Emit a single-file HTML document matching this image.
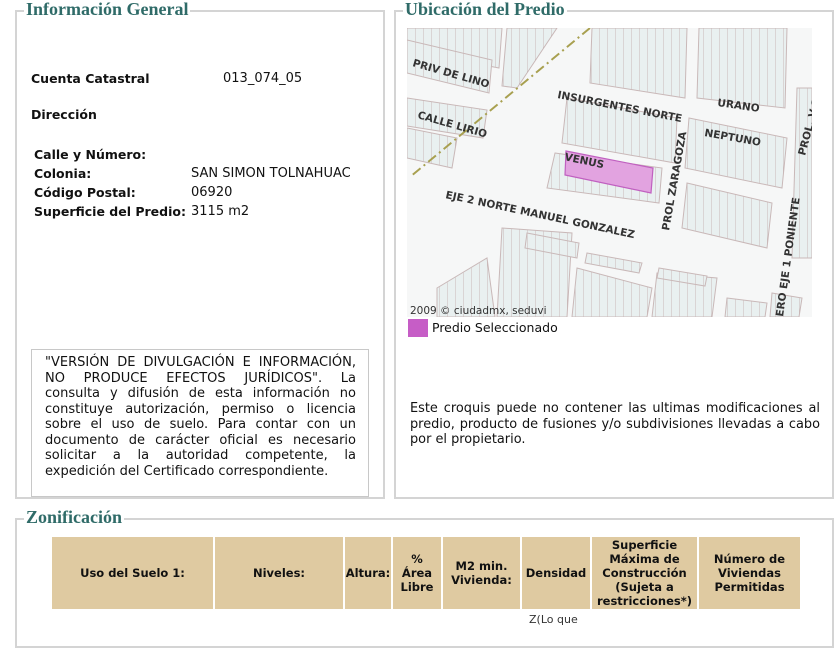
<!DOCTYPE html>
<html><head><meta charset="utf-8"><style>
*{margin:0;padding:0;box-sizing:border-box}
body{width:840px;height:630px;background:#fff;position:relative;overflow:hidden;font-family:"DejaVu Sans","Liberation Sans",sans-serif;font-size:12.5px;color:#111}
.fs{position:absolute;border:2px solid #d4d4d4;}
.lg{position:absolute;background:#fff;font-family:"Liberation Serif",serif;font-weight:bold;font-size:18px;color:#2f6b68;padding:0 2px;line-height:18px}
.a{position:absolute;white-space:nowrap}
.b{font-weight:bold}
table{position:absolute;left:50px;top:535px;border-collapse:collapse}
th{background:#dfcaa1;border:2px solid #fff;font-size:11.5px;font-weight:bold;text-align:center;line-height:14px;height:74px;padding:0}
</style></head><body>
<div class="fs" style="left:15px;top:10px;width:370px;height:489px"></div>
<div class="lg" style="left:24px;top:0px">Información General</div>
<div class="a b" style="left:31px;top:71px">Cuenta Catastral</div>
<div class="a" style="left:223px;top:71px;font-size:13px">013_074_05</div>
<div class="a b" style="left:31px;top:107px">Dirección</div>
<div class="a b" style="left:34px;top:145px;line-height:19px">Calle y Número:<br>Colonia:<br>Código Postal:<br>Superficie del Predio:</div>
<div class="a" style="left:191px;top:164px;line-height:19px;font-size:13px">SAN SIMON TOLNAHUAC<br>06920<br>3115 m2</div>
<div style="position:absolute;left:31px;top:349px;width:338px;height:148px;border:1px solid #c8c8c8;padding:5px 12px 0 13px;font-size:13px;line-height:15.5px;text-align:justify">"VERSIÓN DE DIVULGACIÓN E INFORMACIÓN, NO PRODUCE EFECTOS JURÍDICOS". La consulta y difusión de esta información no constituye autorización, permiso o licencia sobre el uso de suelo. Para contar con un documento de carácter oficial es necesario solicitar a la autoridad competente, la expedición del Certificado correspondiente.</div>

<div class="fs" style="left:394px;top:10px;width:440px;height:489px"></div>
<div class="lg" style="left:403px;top:0px">Ubicación del Predio</div>
<svg style="position:absolute;left:407px;top:28px" width="405" height="289" viewBox="0 0 405 289">
<defs><pattern id="p" width="8" height="60" patternUnits="userSpaceOnUse"><rect width="8" height="60" fill="#e9f0f0"/><path d="M0 0V60" stroke="#c9b8b8" stroke-width="1"/></pattern></defs>
<rect width="405" height="289" fill="#f6f7f7"/>
<g fill="url(#p)" stroke="#c9b8b8" stroke-width="1">
<polygon points="0,0 95,0 92,40 0,22"/>
<polygon points="0,12 85,32 82,65 0,45"/>
<polygon points="0,70 80,82 76,110 0,98"/>
<polygon points="0,100 50,110 45,140 0,130"/>
<polygon points="100,0 150,0 110,60 95,58"/>
<polygon points="185,0 280,0 278,70 183,55"/>
<polygon points="292,0 380,0 378,80 290,70"/>
<polygon points="160,70 270,90 268,135 155,115"/>
<polygon points="148,125 255,140 252,175 140,160"/>
<polygon points="282,90 380,110 375,160 278,140"/>
<polygon points="280,155 365,175 360,220 275,200"/>
<polygon points="390,60 405,60 405,230 385,230"/>
<polygon points="95,200 165,205 160,289 90,289"/>
<polygon points="30,260 80,230 88,289 30,289"/>
<polygon points="170,240 245,260 240,289 165,289"/>
<polygon points="250,245 310,250 305,289 245,289"/>
<polygon points="320,270 360,275 358,289 318,289"/>
<polygon points="365,265 395,270 392,289 363,289"/>
<polygon points="120,205 172,215 170,230 118,220"/>
<polygon points="180,225 235,235 232,245 178,235"/>
<polygon points="252,240 300,248 298,258 250,250"/>
</g>
<polygon points="159,123 246,140 244,165 158,147" fill="#e2a3e0" stroke="#c060c0" stroke-width="1.2"/>
<path d="M183 0 L3 149" stroke="#a8a050" stroke-width="2" stroke-dasharray="10,4,2,4" fill="none"/>
<g font-family="DejaVu Sans,sans-serif" font-size="10.5" font-weight="bold" fill="#333">
<text transform="translate(5,38) rotate(16)">PRIV DE LINO</text>
<text transform="translate(10,90) rotate(16)">CALLE LIRIO</text>
<text transform="translate(150,70) rotate(11)">INSURGENTES NORTE</text>
<text transform="translate(310,78) rotate(8)">URANO</text>
<text transform="translate(297,108) rotate(10)">NEPTUNO</text>
<text transform="translate(157,132) rotate(12)">VENUS</text>
<text transform="translate(38,170) rotate(12)">EJE 2 NORTE MANUEL GONZALEZ</text>
<text transform="translate(262,203) rotate(-80)">PROL ZARAGOZA</text>
<text transform="translate(398,128) rotate(-75)">PROL. V.GUERR</text>
<text transform="translate(376,289) rotate(-82)">ERO EJE 1 PONIENTE</text>
<text x="3" y="286" font-weight="normal" font-size="10.5">2009 © ciudadmx, seduvi</text>
</g>
</svg>
<div style="position:absolute;left:408px;top:319px;width:20px;height:18px;background:#c65dc6"></div>
<div class="a" style="left:432px;top:320px;font-size:12.5px">Predio Seleccionado</div>
<div style="position:absolute;left:410px;top:401px;width:410px;font-size:12.9px;line-height:15.5px;text-align:justify">Este croquis puede no contener las ultimas modificaciones al predio, producto de fusiones y/o subdivisiones llevadas a cabo por el propietario.</div>

<div class="fs" style="left:15px;top:518px;width:819px;height:130px"></div>
<div class="lg" style="left:24px;top:508px">Zonificación</div>
<table><tr>
<th style="width:163px">Uso del Suelo 1:</th>
<th style="width:130px">Niveles:</th>
<th style="width:48px">Altura:</th>
<th style="width:50px">%<br>Área<br>Libre</th>
<th style="width:79px">M2 min.<br>Vivienda:</th>
<th style="width:70px">Densidad</th>
<th style="width:107px">Superficie<br>Máxima de<br>Construcción<br>(Sujeta a<br>restricciones*)</th>
<th style="width:103px">Número de<br>Viviendas<br>Permitidas</th>
</tr></table>
<div class="a" style="left:529px;top:613px;font-size:11px;color:#333">Z(Lo que</div>
</body></html>
